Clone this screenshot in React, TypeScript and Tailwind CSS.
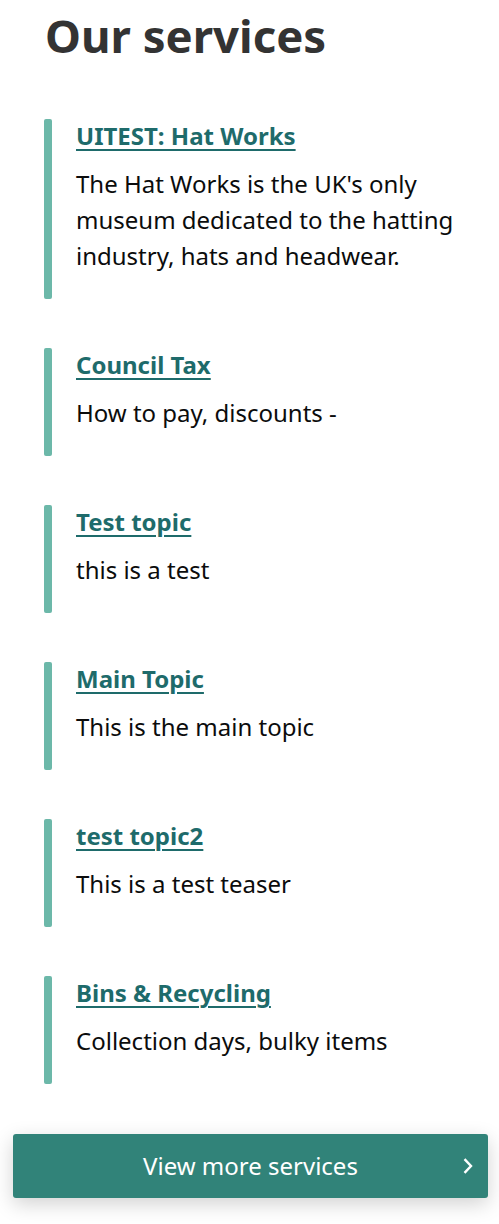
import React from "react";

const items = [
  { title: "UITEST: Hat Works", body: "The Hat Works is the UK's only museum dedicated to the hatting industry, hats and headwear." },
  { title: "Council Tax", body: "How to pay, discounts -" },
  { title: "Test topic", body: "this is a test" },
  { title: "Main Topic", body: "This is the main topic" },
  { title: "test topic2", body: "This is a test teaser" },
  { title: "Bins & Recycling", body: "Collection days, bulky items" },
];

export default function App() {
  return (
    <div className="w-[499px] min-h-[1224px] bg-white" style={{ fontFamily: '"Noto Sans", "Open Sans", sans-serif' }}>
      <div className="px-[44px]">
        <h1 className="text-[45.5px] leading-[72px] font-bold text-[#333333] -mt-[1px] pl-[1px]">Our services</h1>
        <ul className="mt-[48px] flex flex-col gap-[49px]">
          {items.map((it) => (
            <li key={it.title} className="flex">
              <div className="w-[8px] shrink-0 rounded-[2px] bg-[#6cb8a9]" />
              <div className="pl-[24px] pb-[25px]">
                <a href="#" className="block text-[24px] leading-[34px] font-bold text-[#1e6b6b] underline underline-offset-[4px] decoration-[2px]">
                  {it.title}
                </a>
                <p className="mt-[13px] text-[24px] leading-[36px] text-[#0b0c0c]">{it.body}</p>
              </div>
            </li>
          ))}
        </ul>
      </div>
      <div className="pl-[13px] mt-[50px]">
        <a href="#" className="relative flex w-[475px] h-[64px] items-center justify-center rounded-[3px] bg-[#318379] text-white text-[24px] shadow-[0_6px_20px_rgba(0,0,0,0.18)]">
          View more services
          <svg className="absolute right-[14px]" width="12" height="16" viewBox="0 0 12 16" fill="none">
            <path d="M2.5 1.2 L9 8 L2.5 14.8" stroke="white" strokeWidth="2.4" />
          </svg>
        </a>
      </div>
    </div>
  );
}
